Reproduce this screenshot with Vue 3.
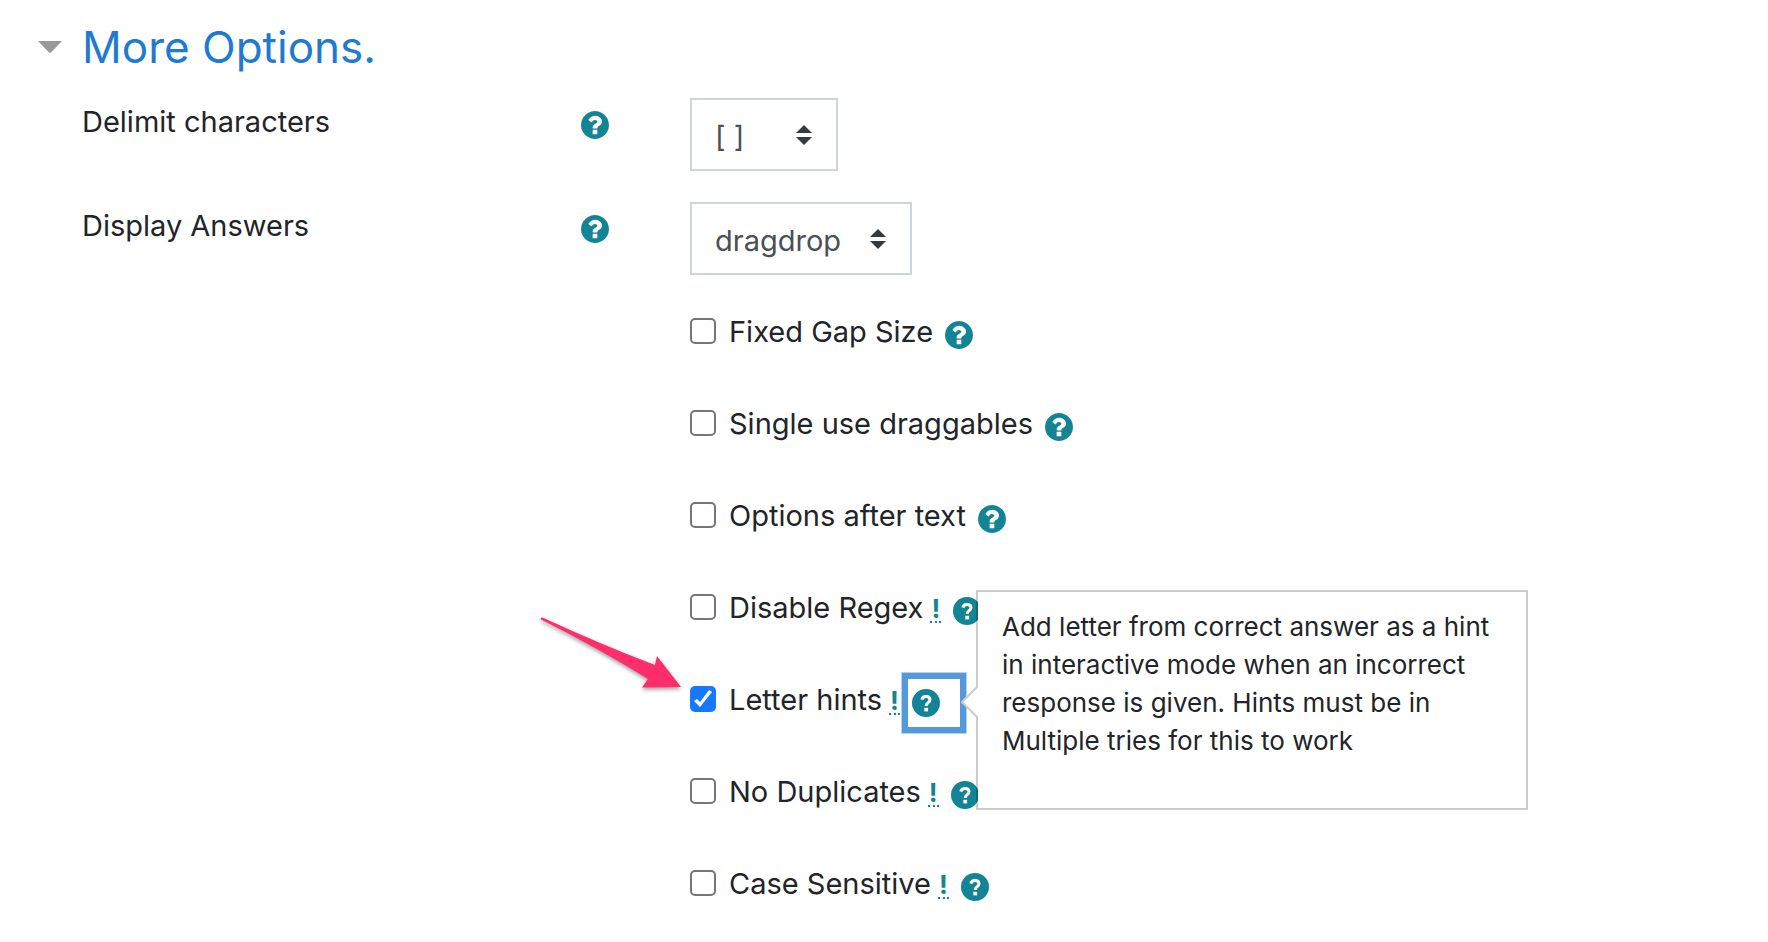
<template>
  <form class="options-page" @submit.prevent>
    <h2 class="section-title">
      <button type="button" class="toggle" :aria-expanded="expanded" @click="expanded = !expanded">
        <svg class="caret" viewBox="0 0 24 12" aria-hidden="true"><path d="M0 0h24L13 11.500q-1 .8-2 0z" /></svg>
        <span>More Options.</span>
      </button>
    </h2>

    <div v-show="expanded" class="fields">
      <div v-for="item in selects" :key="item.id" class="field-row">
        <div class="field-label">
          <label :for="item.id">{{ item.label }}</label>
          <button type="button" class="help" :aria-label="'Help with ' + item.label">
            <svg viewBox="0 128 1536 1536" aria-hidden="true"><path :d="questionIcon" /></svg>
          </button>
        </div>
        <div class="select-wrap">
          <select :id="item.id" v-model="item.value">
            <option v-for="option in item.options" :key="option">{{ option }}</option>
          </select>
          <svg class="chevrons" viewBox="0 0 16 20" aria-hidden="true"><path d="M0 8L8 0l8 8zM0 12h16l-8 8z" /></svg>
        </div>
      </div>

      <div class="field-row">
        <div class="checks">
          <div v-for="item in checks" :key="item.id" class="check-row">
            <input :id="item.id" v-model="item.checked" type="checkbox">
            <label :for="item.id">{{ item.label }}</label>
            <a v-if="item.advanced" href="#" class="advanced" title="Advanced element">!</a>
            <button
              type="button"
              class="help"
              :class="{ focused: item.hint }"
              :aria-label="'Help with ' + item.label"
            >
              <svg v-if="item.advanced" viewBox="0 0 28 28" aria-hidden="true">
                <circle cx="14" cy="14" r="14" />
                <path class="mark" d="M9.800 10.600C10.600 6.400 18 6.500 18 10.800C18 13.800 14.200 13.400 14.200 17" />
                <path class="dot" d="M12.300 18.800h3.800v3.600h-3.800z" />
              </svg>
              <svg v-else viewBox="0 128 1536 1536" aria-hidden="true"><path :d="questionIcon" /></svg>
            </button>
            <div v-if="item.hint" class="popover" role="tooltip">
              <svg class="popover-tip" viewBox="0 0 17 34" aria-hidden="true"><path d="M17 1L1 17l16 16" /></svg>
              <p>{{ item.hint }}</p>
            </div>
            <svg v-if="item.hint" class="pointer" viewBox="0 0 146 80" aria-hidden="true">
              <path d="M1 4.500Q0 2 3 2.700Q60 29 115 50L117 41L141 72L102 72.500L108 64Q60 34 1 4.500Z" />
            </svg>
          </div>
        </div>
      </div>
    </div>
  </form>
</template>

<script setup>
import { ref } from 'vue'

const expanded = ref(true)

const selects = ref([
  { id: 'delimitchars', label: 'Delimit characters', value: '[ ]', options: ['[ ]', '{ }', '# #', '@ @'] },
  { id: 'answerdisplay', label: 'Display Answers', value: 'dragdrop', options: ['dragdrop', 'gapfill', 'dropdown'] }
])

const checks = ref([
  { id: 'fixedgapsize', label: 'Fixed Gap Size', checked: false },
  { id: 'singleuse', label: 'Single use draggables', checked: false },
  { id: 'optionsaftertext', label: 'Options after text', checked: false },
  { id: 'disableregex', label: 'Disable Regex', checked: false, advanced: true },
  {
    id: 'letterhints',
    label: 'Letter hints',
    checked: true,
    advanced: true,
    hint: 'Add letter from correct answer as a hint in interactive mode when an incorrect response is given. Hints must be in Multiple tries for this to work'
  },
  { id: 'noduplicates', label: 'No Duplicates', checked: false, advanced: true },
  { id: 'casesensitive', label: 'Case Sensitive', checked: false, advanced: true }
])

const questionIcon = 'M896 1376v-192q0-14-9-23t-23-9h-192q-14 0-23 9t-9 23v192q0 14 9 23t23 9h192q14 0 23-9t9-23zM1152 704q0-88-55.5-163t-138.5-116-170-41q-243 0-371 213-15 24 8 42l132 100q7 6 19 6 16 0 25-12 53-68 86-92 34-24 86-24 48 0 85.5 26t37.5 59q0 38-20 61t-68 45q-63 28-115.5 86.5t-52.5 125.5v36q0 14 9 23t23 9h192q14 0 23-9t9-23q0-19 21.5-49.5t54.5-49.5q32-18 49-28.5t46-35 44.5-48 28-60.5 12.5-81zM1536 896q0 209-103 385.5t-279.5 279.5-385.5 103-385.5-103-279.5-279.5-103-385.5 103-385.5 279.5-279.5 385.5-103 385.5 103 279.5 279.5 103 385.5z'
</script>

<style>
body {
  background: #fff;
}
</style>

<style scoped>
.options-page {
  padding: 15px 82px 0 38px;
  font-family: Inter, "Liberation Sans", sans-serif;
  font-size: 29px;
  line-height: 44px;
  color: #212529;
}

.section-title {
  margin: 0;
  font-size: 44px;
  font-weight: 400;
  line-height: 64px;
}

.toggle {
  display: flex;
  align-items: center;
  gap: 20px;
  padding: 0;
  border: none;
  background: none;
  font: inherit;
  color: #1f7ad1;
  cursor: pointer;
}

.caret {
  width: 24px;
  height: 12px;
  fill: #999;
}

.fields {
  padding: 19px 0 0 44px;
}

.field-row {
  display: grid;
  grid-template-columns: 527fr 996fr;
  column-gap: 81px;
  margin-bottom: 31px;
}

.field-label {
  display: flex;
  justify-content: space-between;
  align-items: flex-start;
  padding-top: 2px;
}

.help {
  display: flex;
  padding: 0;
  border: none;
  background: none;
  color: #138496;
  cursor: pointer;
}

.help svg {
  width: 28px;
  height: 28px;
  fill: currentColor;
}

.help .mark {
  fill: none;
  stroke: #fff;
  stroke-width: 3;
}

.help .dot {
  fill: #fff;
}

.field-label .help {
  padding-top: 11px;
}

.select-wrap {
  position: relative;
  justify-self: start;
}

select {
  display: block;
  appearance: none;
  height: 73px;
  padding: 5px 56px 0 23px;
  border: 2px solid #ced4da;
  border-radius: 0;
  background: #fff;
  color: #495057;
  font: inherit;
}

.chevrons {
  position: absolute;
  top: 27px;
  right: 26px;
  width: 16px;
  height: 20px;
  fill: #343a40;
  pointer-events: none;
}

.checks {
  display: flex;
  flex-direction: column;
  grid-column: 2;
  gap: 48px;
  padding-top: 3px;
}

.check-row {
  position: relative;
  display: flex;
  align-items: center;
  height: 44px;
}

.check-row label {
  padding-top: 2px;
}

input[type="checkbox"] {
  appearance: none;
  width: 26px;
  height: 26px;
  margin: 0 13px 0 0;
  border: 2px solid #767676;
  border-radius: 5px;
  background: #fff;
}

input[type="checkbox"]:checked {
  border-color: #1677ff;
  background: #1677ff;
}

input[type="checkbox"]:checked::before {
  content: "";
  display: block;
  width: 22px;
  height: 22px;
  background: #fff;
  clip-path: polygon(2px 13px, 5px 11px, 8px 14px, 17px 2px, 20px 4px, 8px 19px);
}

.check-row .help {
  margin: 7px 0 0 8px;
  padding: 10px 20px 10px 4px;
}

.check-row .focused {
  background: #fff;
  box-shadow: 0 0 0 6px #5599dc, 0 0 0 7px #b5d2ef;
}

.advanced {
  margin: 6px 0 0 7px;
  padding: 0 1px;
  border-bottom: 2px dotted #138496;
  color: #138496;
  font-size: 26px;
  font-weight: 700;
  line-height: 24px;
  text-decoration: none;
}

.popover {
  position: absolute;
  top: -87px;
  left: 286px;
  z-index: 1;
  width: 552px;
  border: 2px solid rgba(0, 0, 0, 0.2);
  box-sizing: border-box;
  background: #fff;
  background-clip: padding-box;
  padding: 16px 24px 48px;
  font-size: 26px;
  line-height: 38px;
}

.popover p {
  margin: 0;
}

.popover-tip {
  position: absolute;
  top: 93px;
  left: -17px;
  width: 17px;
  height: 34px;
  fill: #fff;
  stroke: #ccc;
  stroke-width: 2;
}

.pointer {
  position: absolute;
  top: -62px;
  left: -150px;
  width: 146px;
  height: 80px;
  fill: #ff2d6b;
  filter: drop-shadow(0 2px 2px rgba(0, 0, 0, 0.4));
}
</style>
